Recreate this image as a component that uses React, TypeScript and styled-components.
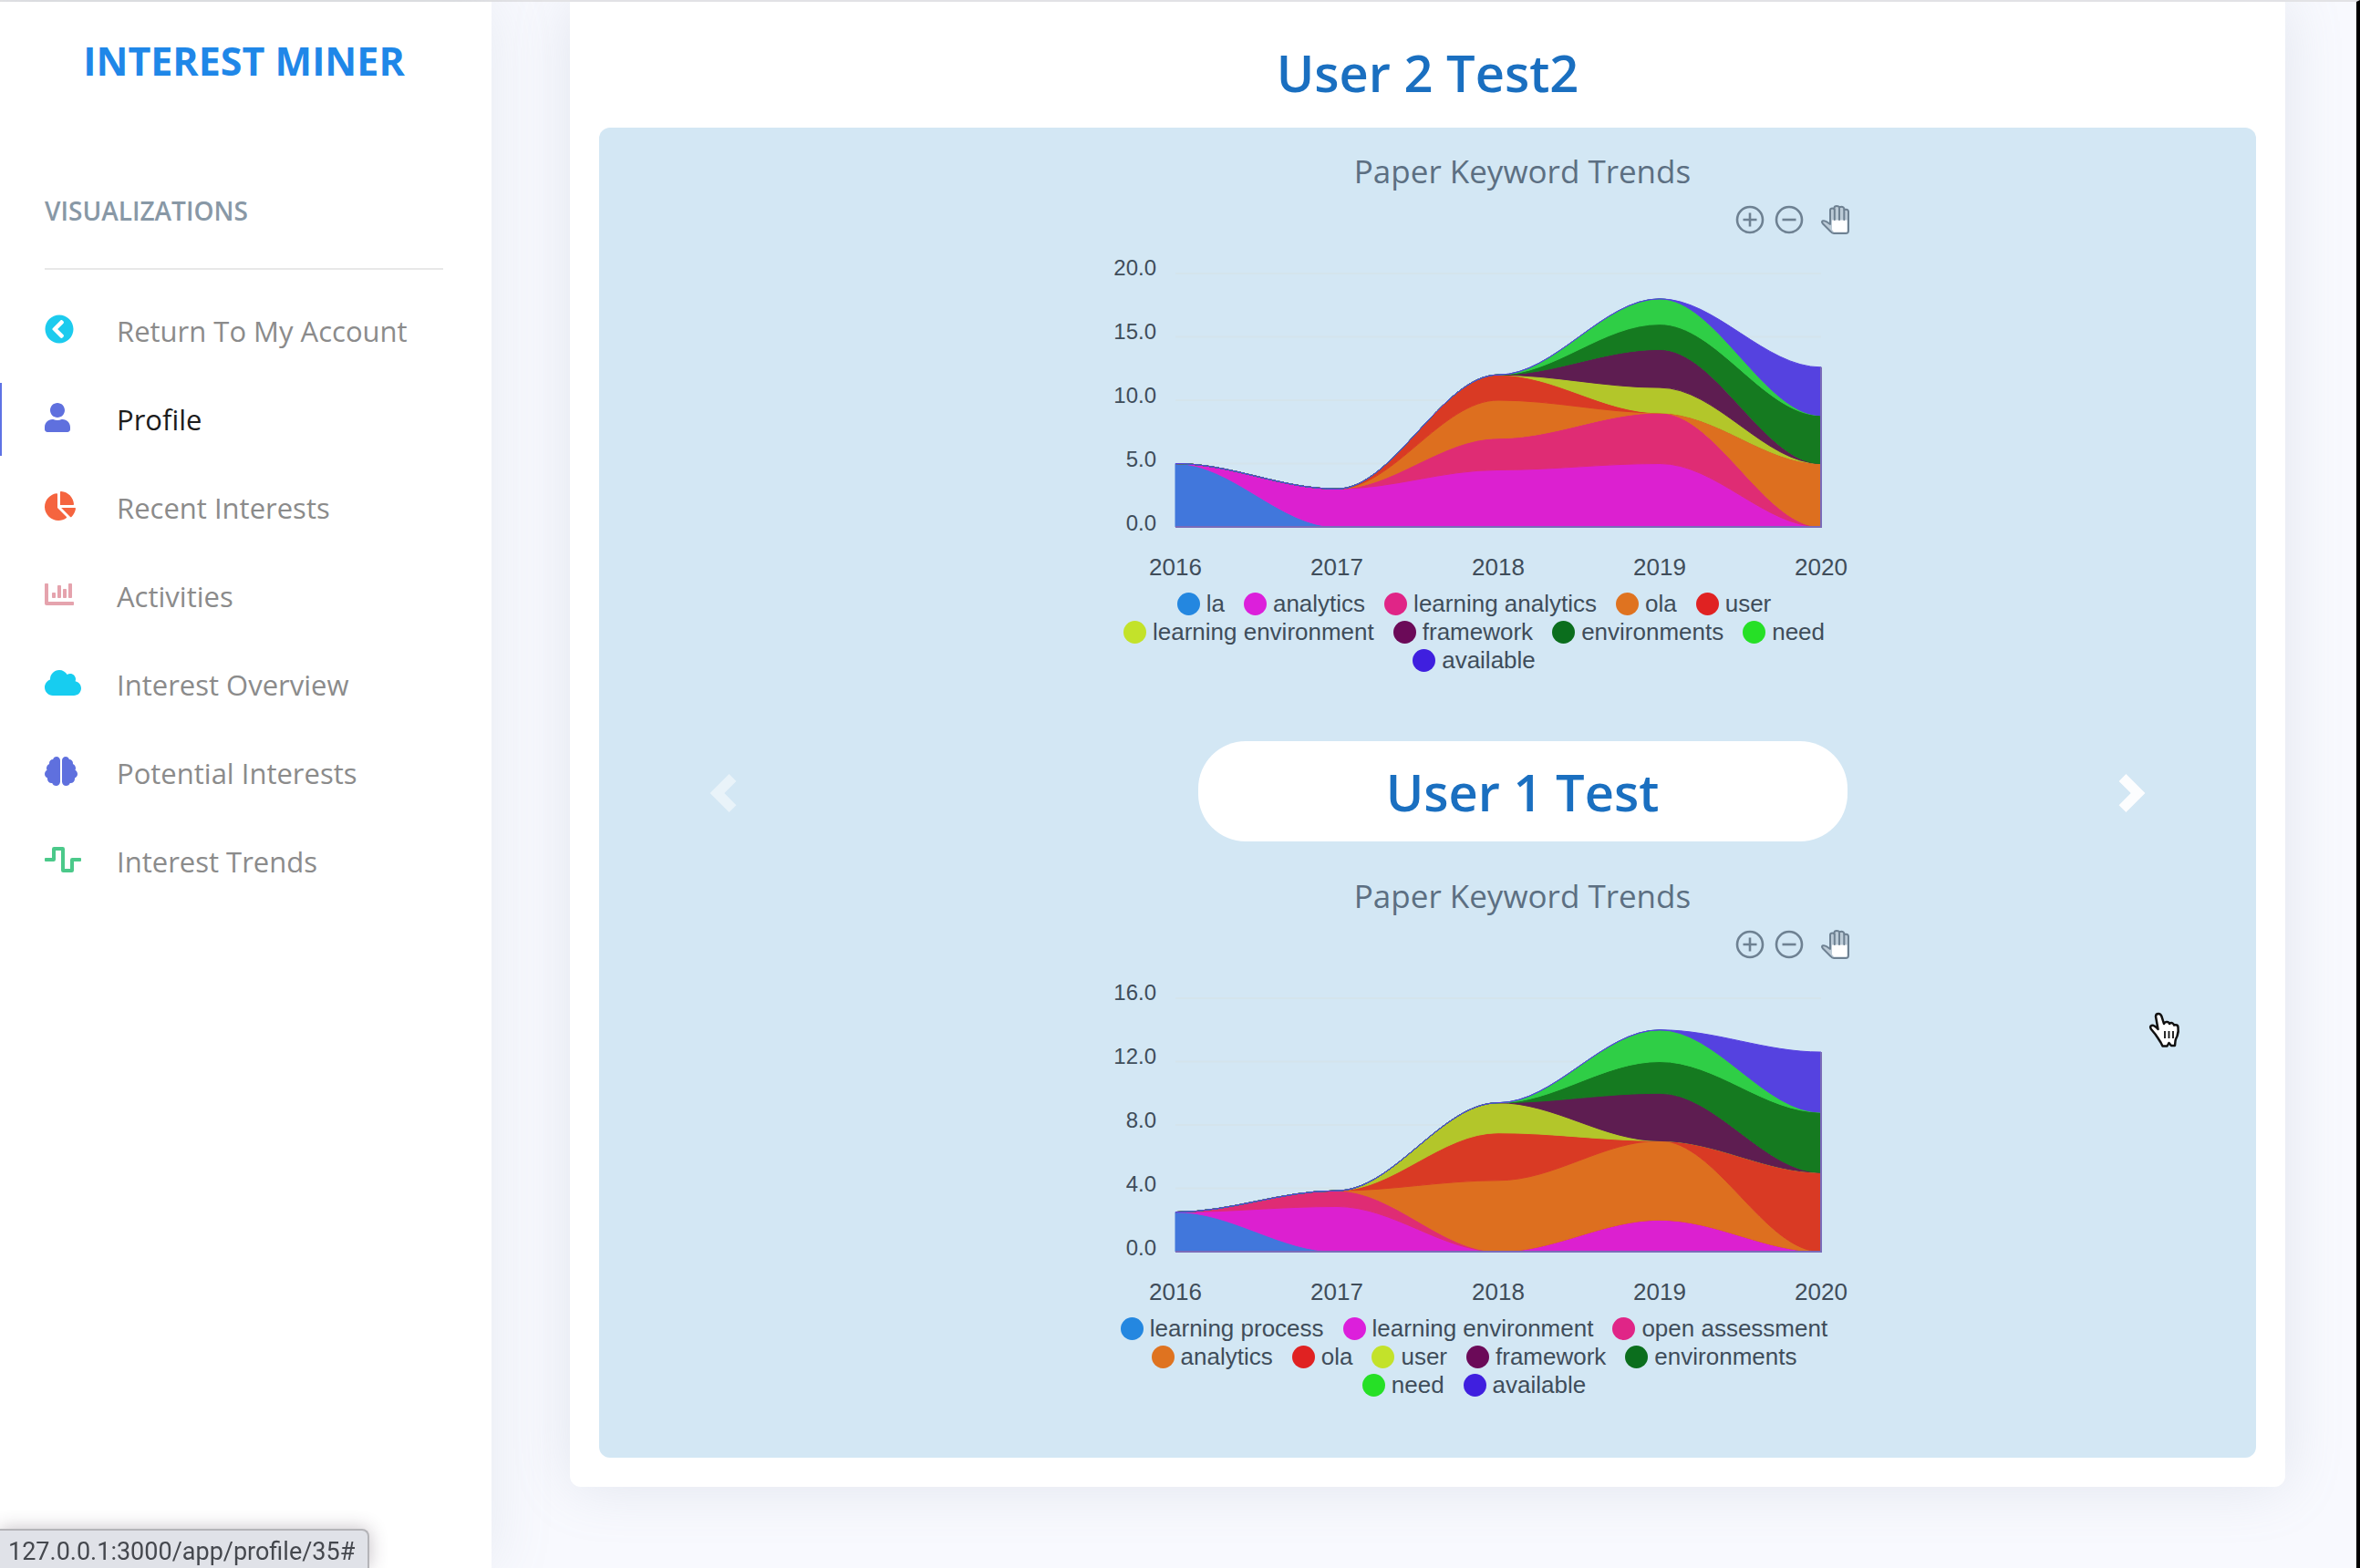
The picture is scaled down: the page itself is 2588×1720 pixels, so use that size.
import React from "react";
import styled, { createGlobalStyle } from "styled-components";
import {
  FaBrain,
  FaChartBar,
  FaChartPie,
  FaChevronCircleLeft,
  FaCloud,
  FaUser,
  FaWaveSquare,
} from "react-icons/fa";

const GlobalStyle = createGlobalStyle`
  *, *::before, *::after { box-sizing: border-box; }
  body {
    margin: 0;
    background: #f8f9fe;
    font-family: "Open Sans", "Noto Sans", sans-serif;
    color: #525f7f;
  }
  h1, h2, h3, ul, figure { margin: 0; padding: 0; }
  ul { list-style: none; }
`;

/* ---------- shell ---------- */

const Shell = styled.div`
  display: grid;
  grid-template-columns: 539px minmax(0, 1fr);
  min-height: 100vh;
  border-top: 2px solid #e2e2e5;
  border-right: 4px solid #000;
`;

const Sidebar = styled.aside`
  position: relative;
  z-index: 1;
  padding: 33px 53px 0 49px;
  background: #fff;
  box-shadow: 0 0 64px rgba(136, 152, 170, 0.15);
`;

const Brand = styled.a`
  display: block;
  font-size: 43px;
  line-height: 64px;
  font-weight: 700;
  text-align: center;
  text-decoration: none;
  white-space: nowrap;
  color: #1f87e8;
`;

const SectionTitle = styled.h2`
  margin-top: 112px;
  font-size: 28px;
  line-height: 40px;
  font-weight: 600;
  color: #8898a6;
`;

const NavList = styled.ul`
  display: flex;
  flex-direction: column;
  gap: 17px;
  margin-top: 43px;
  padding-top: 27px;
  border-top: 2px solid #e8e8e8;
`;

const NavLink = styled.a<{ $active?: boolean }>`
  display: flex;
  align-items: center;
  height: 80px;
  margin-left: -49px;
  padding-left: 47px;
  border-left: 2px solid ${(p) => (p.$active ? "#5e72e4" : "transparent")};
  font-size: 31px;
  line-height: 48px;
  text-decoration: none;
  white-space: nowrap;
  color: ${(p) => (p.$active ? "#1c1c1c" : "#8b8b8b")};
`;

const NavIcon = styled.span<{ $color: string; $width: number }>`
  display: flex;
  flex: none;
  width: 79px;
  padding-bottom: 4px;
  color: ${(p) => p.$color};
  svg { flex: none; width: ${(p) => p.$width}px; height: 32px; }
`;

/* ---------- main card ---------- */

const Main = styled.main`
  padding: 0 78px 88px 86px;
  overflow: hidden;
`;

const Card = styled.section`
  padding: 39px 32px 32px;
  border-radius: 0 0 12px 12px;
  background: #fff;
  box-shadow: 0 0 64px rgba(136, 152, 170, 0.2);
`;

const UserName = styled.h1`
  font-size: 56px;
  line-height: 76px;
  font-weight: 600;
  text-align: center;
  color: #1a6fc0;
`;

const Carousel = styled.div`
  display: grid;
  grid-template-columns: 15% minmax(0, 1fr) 15%;
  margin-top: 23px;
  border-radius: 12px;
  background: #d3e7f4;
`;

const Arrow = styled.button<{ $dim?: boolean }>`
  display: flex;
  align-items: center;
  justify-content: center;
  padding: 0;
  border: 0;
  background: none;
  opacity: ${(p) => (p.$dim ? 0.5 : 0.95)};
  svg { width: 42px; height: 42px; fill: #fff; }
`;

const Slide = styled.div`
  display: flex;
  flex-direction: column;
  align-items: center;
  padding: 18px 0 64px 208px;
`;

const Pill = styled.h1`
  width: 712px;
  margin: 73px 0 30px;
  padding: 17px 0;
  border-radius: 52px;
  background: #fff;
  font-size: 56px;
  line-height: 76px;
  font-weight: 600;
  text-align: center;
  color: #1a6fc0;
`;

const Figure = styled.figure`
  width: 936px;
`;

const FigureTitle = styled.h3`
  font-size: 35px;
  line-height: 60px;
  font-weight: 400;
  text-align: center;
  color: #5c6f82;
`;

const ChartColumn = styled.div`
  width: 830px;
`;

const Toolbar = styled.div`
  display: flex;
  justify-content: flex-end;
  align-items: center;
  gap: 11px;
  height: 45px;
  padding-right: 3px;
`;

const Tool = styled.button<{ $gap?: boolean }>`
  display: flex;
  margin-left: ${(p) => (p.$gap ? "8px" : "0")};
  padding: 0;
  border: 0;
  background: none;
  svg { width: 32px; height: 32px; }
`;

const Plot = styled.svg`
  display: block;
  width: 100%;
  margin-top: 18px;
  text { font-family: "Liberation Sans", Arial, sans-serif; fill: #3f4d5a; }
`;

const Legend = styled.ul`
  display: flex;
  flex-wrap: wrap;
  justify-content: center;
  column-gap: 21px;
  width: 800px;
  margin: 6px auto 0;
`;

const LegendItem = styled.li`
  display: flex;
  align-items: center;
  gap: 7px;
  font-family: "Liberation Sans", Arial, sans-serif;
  font-size: 26px;
  line-height: 31px;
  white-space: nowrap;
  color: #3f4d5a;
`;

const Dot = styled.span<{ $color: string }>`
  width: 25px;
  height: 25px;
  border-radius: 50%;
  background: ${(p) => p.$color};
`;

/* ---------- overlays ---------- */

const StatusBar = styled.div`
  position: fixed;
  left: 0;
  bottom: 0;
  z-index: 2;
  padding: 5px 14px 0 9px;
  border: solid #b4b4b8;
  border-width: 2px 2px 0 0;
  border-radius: 0 8px 0 0;
  background: #e0e2e8;
  box-shadow: 0 0 20px rgba(60, 40, 60, 0.3);
  font-family: Roboto, sans-serif;
  font-size: 27px;
  line-height: 36px;
  color: #45484e;
`;

const Pointer = styled.svg`
  position: absolute;
  left: 2356px;
  top: 1110px;
  width: 36px;
  height: 40px;
  z-index: 2;
`;

/* ---------- data ---------- */

const NAV = [
  { label: "Return To My Account", color: "#1ccbee", Icon: FaChevronCircleLeft, width: 32 },
  { label: "Profile", color: "#5f70de", Icon: FaUser, width: 28, active: true },
  { label: "Recent Interests", color: "#f5643f", Icon: FaChartPie, width: 34 },
  { label: "Activities", color: "#e5a3ad", Icon: FaChartBar, width: 32 },
  { label: "Interest Overview", color: "#17cdf0", Icon: FaCloud, width: 40 },
  { label: "Potential Interests", color: "#5f70de", Icon: FaBrain, width: 36 },
  { label: "Interest Trends", color: "#4bc98a", Icon: FaWaveSquare, width: 40 },
];

const YEARS = ["2016", "2017", "2018", "2019", "2020"];

const PALETTE = [
  { dot: "#2487e0", area: "#4177dc" },
  { dot: "#dc1fdb", area: "#dc20d0" },
  { dot: "#e02587", area: "#df2c74" },
  { dot: "#df7320", area: "#dd6f1f" },
  { dot: "#e02222", area: "#d93a24" },
  { dot: "#c3e22a", area: "#b3c62a" },
  { dot: "#6b0a58", area: "#5e1d51" },
  { dot: "#0b6e1d", area: "#157a20" },
  { dot: "#26e026", area: "#2fce46" },
  { dot: "#3f1fdf", area: "#5542e0" },
];

type Series = { name: string; values: number[] };

const USER_2: Series[] = [
  { name: "la", values: [5, 0, 0, 0, 0] },
  { name: "analytics", values: [0, 3, 4.5, 5, 0] },
  { name: "learning analytics", values: [0, 0, 2.5, 4, 0] },
  { name: "ola", values: [0, 0, 3, 0, 5] },
  { name: "user", values: [0, 0, 2, 0, 0] },
  { name: "learning environment", values: [0, 0, 0, 2, 0] },
  { name: "framework", values: [0, 0, 0, 3, 0] },
  { name: "environments", values: [0, 0, 0, 2, 3.8] },
  { name: "need", values: [0, 0, 0, 2, 0] },
  { name: "available", values: [0, 0, 0, 0, 3.8] },
];

const USER_1: Series[] = [
  { name: "learning process", values: [2.5, 0, 0, 0, 0] },
  { name: "learning environment", values: [0, 2.85, 0, 2, 0] },
  { name: "open assessment", values: [0, 1, 0, 0, 0] },
  { name: "analytics", values: [0, 0, 4.5, 5, 0] },
  { name: "ola", values: [0, 0, 3, 0, 5] },
  { name: "user", values: [0, 0, 1.9, 0, 0] },
  { name: "framework", values: [0, 0, 0, 3, 0] },
  { name: "environments", values: [0, 0, 0, 2, 3.8] },
  { name: "need", values: [0, 0, 0, 2, 0] },
  { name: "available", values: [0, 0, 0, 0, 3.8] },
];

/* ---------- chart ---------- */

const LEFT = 87;
const STEP = 177;
const TOP = 19;
const HEIGHT = 278;
const BASE = TOP + HEIGHT;
const RIGHT = LEFT + STEP * 4;

/** Smooth line through the points, flat at each of them. */
function curve(ys: number[], backwards = false) {
  const points = ys.map((y, i) => [LEFT + STEP * i, y]);
  if (backwards) points.reverse();
  const handle = STEP * 0.35 * (backwards ? -1 : 1);
  return points
    .map(([x, y], i) => {
      if (i === 0) return `${x} ${y}`;
      const [px, py] = points[i - 1];
      return `C${px + handle} ${py} ${x - handle} ${y} ${x} ${y}`;
    })
    .join(" ");
}

function AreaChart({ series, max }: { series: Series[]; max: number }) {
  const toY = (v: number) => BASE - (v / max) * HEIGHT;
  let floor = YEARS.map(() => 0);
  const bands = series.map((s, i) => {
    const roof = floor.map((v, k) => v + s.values[k]);
    const top = curve(roof.map(toY));
    const d = `M${top} L${curve(floor.map(toY), true)} Z`;
    floor = roof;
    return { d, color: PALETTE[i].area };
  });
  return (
    <Plot viewBox="0 0 830 360" role="img" aria-label="Paper keyword trends by year">
      {[1, 2, 3, 4].map((n) => (
        <line key={n} x1={LEFT} x2={RIGHT} y1={toY((max / 4) * n)} y2={toY((max / 4) * n)} stroke="#d4e4ec" strokeWidth="2" />
      ))}
      {bands.map((b) => (
        <path key={b.color} d={b.d} fill={b.color} stroke={b.color} strokeWidth="1" />
      ))}
      <path d={`M${LEFT} ${BASE}H${RIGHT}V${toY(floor[4])}`} fill="none" stroke="#7a6bb8" strokeWidth="2" />
      {[0, 1, 2, 3, 4].map((n) => (
        <text key={n} x="66" y={BASE + 4 - n * 70} fontSize="24" textAnchor="end">
          {((max / 4) * n).toFixed(1)}
        </text>
      ))}
      {YEARS.map((year, i) => (
        <text key={year} x={LEFT + STEP * i} y="350" fontSize="26" textAnchor="middle">
          {year}
        </text>
      ))}
    </Plot>
  );
}

function TrendFigure({ series, max }: { series: Series[]; max: number }) {
  return (
    <Figure>
      <FigureTitle>Paper Keyword Trends</FigureTitle>
      <ChartColumn>
        <Toolbar>
          <Tool type="button" aria-label="Zoom in">
            <svg viewBox="0 0 32 32" fill="none" stroke="#6e8192" strokeWidth="2.600">
              <circle cx="16" cy="16" r="14" />
              <path d="M8.500 16h15M16 8.500v15" />
            </svg>
          </Tool>
          <Tool type="button" aria-label="Zoom out">
            <svg viewBox="0 0 32 32" fill="none" stroke="#6e8192" strokeWidth="2.600">
              <circle cx="16" cy="16" r="14" />
              <path d="M8.500 16h15" />
            </svg>
          </Tool>
          <Tool type="button" aria-label="Pan" $gap>
            <svg viewBox="0 0 32 32" stroke="#6e8192" strokeWidth="2" strokeLinejoin="round" strokeLinecap="round">
              <path
                d="M10 21V5.500q0-2 2.500-2 1.500 0 2 1V3q0-2 2.700-2 2.300 0 2.800 1.500Q22.500 1 24.500 2.500q1 1 1 2.500 4-1 4.500 2V28q0 3-3 3H14q-2 0-3.500-2L2 20.500Q0 18 2 17.300q2-.6 4.500 1.200Z"
                fill="#bccbd7"
              />
              <path d="M12 16.500h16.500v13H14L12 27Z" fill="#fff" stroke="none" />
              <path d="M14.800 5v11M20 3.500V16M25.300 5v11" fill="none" />
            </svg>
          </Tool>
        </Toolbar>
        <AreaChart series={series} max={max} />
        <Legend>
          {series.map((s, i) => (
            <LegendItem key={s.name}>
              <Dot $color={PALETTE[i].dot} />
              {s.name}
            </LegendItem>
          ))}
        </Legend>
      </ChartColumn>
    </Figure>
  );
}

export default function App() {
  return (
    <>
      <GlobalStyle />
      <Shell>
        <Sidebar>
          <Brand href="#">INTEREST MINER</Brand>
          <SectionTitle>VISUALIZATIONS</SectionTitle>
          <nav>
            <NavList>
              {NAV.map(({ label, color, Icon, width, active }) => (
                <li key={label}>
                  <NavLink href="#" $active={active}>
                    <NavIcon $color={color} $width={width}>
                      <Icon />
                    </NavIcon>
                    {label}
                  </NavLink>
                </li>
              ))}
            </NavList>
          </nav>
        </Sidebar>
        <Main>
          <Card>
            <UserName>User 2 Test2</UserName>
            <Carousel>
              <Arrow type="button" aria-label="Previous" $dim>
                <svg viewBox="0 0 8 8">
                  <path d="M5.250 0l-4 4 4 4 1.500-1.500L4.250 4l2.500-2.500L5.250 0z" />
                </svg>
              </Arrow>
              <Slide>
                <TrendFigure series={USER_2} max={20} />
                <Pill>User 1 Test</Pill>
                <TrendFigure series={USER_1} max={16} />
              </Slide>
              <Arrow type="button" aria-label="Next">
                <svg viewBox="0 0 8 8">
                  <path d="M2.750 0l-1.500 1.500L3.750 4l-2.500 2.500L2.750 8l4-4-4-4z" />
                </svg>
              </Arrow>
            </Carousel>
          </Card>
        </Main>
      </Shell>
      <StatusBar>127.0.0.1:3000/app/profile/35#</StatusBar>
      <Pointer viewBox="0 0 36 40" aria-hidden="true">
        <path
          d="M8 5q0-3 3-3 2.500 0 3.500 3l2.500 8q1-2.500 3.500-2t2.500 2q2-1.500 3.500-.5t1.500 2q4-1 4.500 2 .8 5-1 10-2 4-2 5.500l-.5 5h-4l-2.500-3-2 3.500h-5l-2-4Q10 28 7.500 24.500L3 19q-2-3 .5-4t7 4L8 5Z"
          fill="#fff"
          stroke="#111"
          strokeWidth="2.500"
          strokeLinejoin="round"
        />
        <path d="M18 21v8M22.500 21v8M27 21v8" stroke="#111" strokeWidth="1.800" />
      </Pointer>
    </>
  );
}
